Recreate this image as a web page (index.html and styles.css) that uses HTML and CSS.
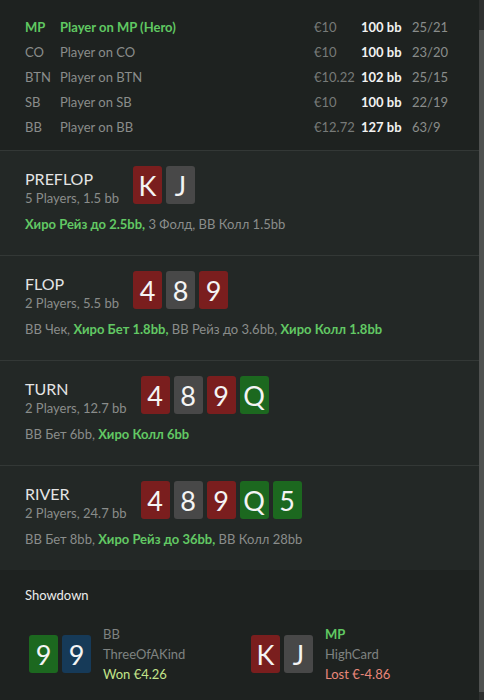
FILE: index.html
```html
<!DOCTYPE html>
<html lang="ru">
<head>
<meta charset="utf-8">
<title>Hand history</title>
<link rel="stylesheet" href="styles.css">
</head>
<body>
<div class="frame">
<div class="scroller" id="scroller">
  <section class="players">
    <h2 class="players-title">Players</h2>
    <div class="ptable">
      <span class="pos hero">MP</span><span class="name hero">Player on MP (Hero)</span><span class="money">€10</span><span class="bb">100 bb</span><span class="stat">25/21</span>
      <span class="pos">CO</span><span class="name">Player on CO</span><span class="money">€10</span><span class="bb">100 bb</span><span class="stat">23/20</span>
      <span class="pos">BTN</span><span class="name">Player on BTN</span><span class="money">€10.22</span><span class="bb">102 bb</span><span class="stat">25/15</span>
      <span class="pos">SB</span><span class="name">Player on SB</span><span class="money">€10</span><span class="bb">100 bb</span><span class="stat">22/19</span>
      <span class="pos">BB</span><span class="name">Player on BB</span><span class="money">€12.72</span><span class="bb">127 bb</span><span class="stat">63/9</span>
    </div>
  </section>

  <section class="street">
    <div class="street-head">
      <div class="street-info">
        <div class="street-name">PREFLOP</div>
        <div class="street-sub">5 Players, 1.5 bb</div>
      </div>
      <div class="cards">
        <span class="card red">K</span><span class="card gray">J</span>
      </div>
    </div>
    <div class="actions"><b class="me">Хиро Рейз до 2.5bb,</b> 3 Фолд, BB Колл 1.5bb</div>
  </section>

  <section class="street">
    <div class="street-head">
      <div class="street-info">
        <div class="street-name">FLOP</div>
        <div class="street-sub">2 Players, 5.5 bb</div>
      </div>
      <div class="cards">
        <span class="card red">4</span><span class="card gray">8</span><span class="card red">9</span>
      </div>
    </div>
    <div class="actions">BB Чек, <b class="me">Хиро Бет 1.8bb,</b> BB Рейз до 3.6bb, <b class="me">Хиро Колл 1.8bb</b></div>
  </section>

  <section class="street">
    <div class="street-head">
      <div class="street-info">
        <div class="street-name">TURN</div>
        <div class="street-sub">2 Players, 12.7 bb</div>
      </div>
      <div class="cards">
        <span class="card red">4</span><span class="card gray">8</span><span class="card red">9</span><span class="card green">Q</span>
      </div>
    </div>
    <div class="actions">BB Бет 6bb, <b class="me">Хиро Колл 6bb</b></div>
  </section>

  <section class="street">
    <div class="street-head">
      <div class="street-info">
        <div class="street-name">RIVER</div>
        <div class="street-sub">2 Players, 24.7 bb</div>
      </div>
      <div class="cards">
        <span class="card red">4</span><span class="card gray">8</span><span class="card red">9</span><span class="card green">Q</span><span class="card green">5</span>
      </div>
    </div>
    <div class="actions">BB Бет 8bb, <b class="me">Хиро Рейз до 36bb,</b> BB Колл 28bb</div>
  </section>

  <section class="showdown">
    <h3 class="showdown-title">Showdown</h3>
    <div class="sd-grid">
      <div class="sd-player">
        <div class="cards">
          <span class="card green">9</span><span class="card blue">9</span>
        </div>
        <div class="sd-info">
          <div class="sd-pos">BB</div>
          <div class="sd-hand">ThreeOfAKind</div>
          <div class="won">Won €4.26</div>
        </div>
      </div>
      <div class="sd-player">
        <div class="cards">
          <span class="card red">K</span><span class="card gray">J</span>
        </div>
        <div class="sd-info">
          <div class="sd-pos hero">MP</div>
          <div class="sd-hand">HighCard</div>
          <div class="lost">Lost €-4.86</div>
        </div>
      </div>
    </div>
  </section>
</div>
<div class="scrollbar"><div class="thumb"></div></div>
</div>
<script src="script.js"></script>
</body>
</html>
```

FILE: styles.css
```css
html, body {
  margin: 0;
  padding: 0;
  background: #1e2220;
}

body {
  font-family: "Lato", "Noto Sans", "Liberation Sans", sans-serif;
  font-size: 13px;
  color: #8c908e;
}

.frame {
  position: relative;
  height: 700px;
  overflow: hidden;
}

.scroller {
  height: 700px;
  margin-right: 5px;
  overflow-y: scroll;
  scrollbar-width: none;
  background: #1e2220;
}

.scroller::-webkit-scrollbar {
  display: none;
}

.scrollbar {
  position: absolute;
  top: 0;
  right: 0;
  width: 5px;
  height: 700px;
  background: #2e302f;
}

.thumb {
  margin-top: 30px;
  height: 662px;
  background: #4f5150;
}

.players {
  padding: 16px 25px 11px;
  background: #1e2220;
}

.players-title {
  margin: 0 0 12px;
  font-size: 13px;
  line-height: 18px;
  font-weight: 400;
  color: #dcdcdc;
}

.ptable {
  display: grid;
  grid-template-columns: 35px 254px 47px 51px auto;
  grid-auto-rows: 25px;
  align-items: center;
  line-height: 18px;
}

.pos, .name { color: #8a8d8b; }
.money { color: #777a78; }
.bb { color: #f2f2f2; font-weight: 700; }
.stat { color: #8a8d8b; }
.hero { color: #60c862; font-weight: 700; }

.street {
  background: #232826;
  border-top: 1px solid #333836;
  padding: 15px 25px 22px;
}

.street-head {
  display: flex;
  align-items: flex-start;
  gap: 14px;
  height: 42px;
}

.street-info {
  margin-top: 4px;
}

.street-name {
  font-size: 16px;
  line-height: 18px;
  color: #e4e4e4;
}

.street-sub {
  font-size: 13px;
  line-height: 20px;
  color: #8a8d8b;
}

.cards {
  display: flex;
  gap: 4px;
}

.card {
  width: 29px;
  height: 38px;
  border-radius: 3px;
  display: flex;
  align-items: center;
  justify-content: center;
  font-size: 27px;
  color: #f4f4f4;
  line-height: 1;
}

.red { background: #7a1e1e; }
.gray { background: #484848; }
.green { background: #1c681f; }
.blue { background: #163a58; }

.actions {
  margin-top: 7px;
  line-height: 18px;
  color: #8a8d8b;
}

.me {
  color: #62c864;
  font-weight: 700;
}

.showdown {
  background: #1e2220;
  padding: 16px 25px 25px;
}

.showdown-title {
  margin: 0;
  font-size: 13px;
  line-height: 18px;
  font-weight: 400;
  color: #ececec;
}

.sd-grid {
  display: grid;
  grid-template-columns: 222px 1fr;
  margin-top: 20px;
  padding-left: 4px;
}

.sd-player {
  display: flex;
  align-items: center;
  gap: 12px;
}

.sd-info {
  line-height: 20px;
}

.sd-pos, .sd-hand { color: #7f8381; }
.sd-pos.hero { color: #60c862; }

.won { color: #c3e58a; }
.lost { color: #e9877a; }
```

FILE: script.js
```js
document.getElementById('scroller').scrollTop = 32;
```
